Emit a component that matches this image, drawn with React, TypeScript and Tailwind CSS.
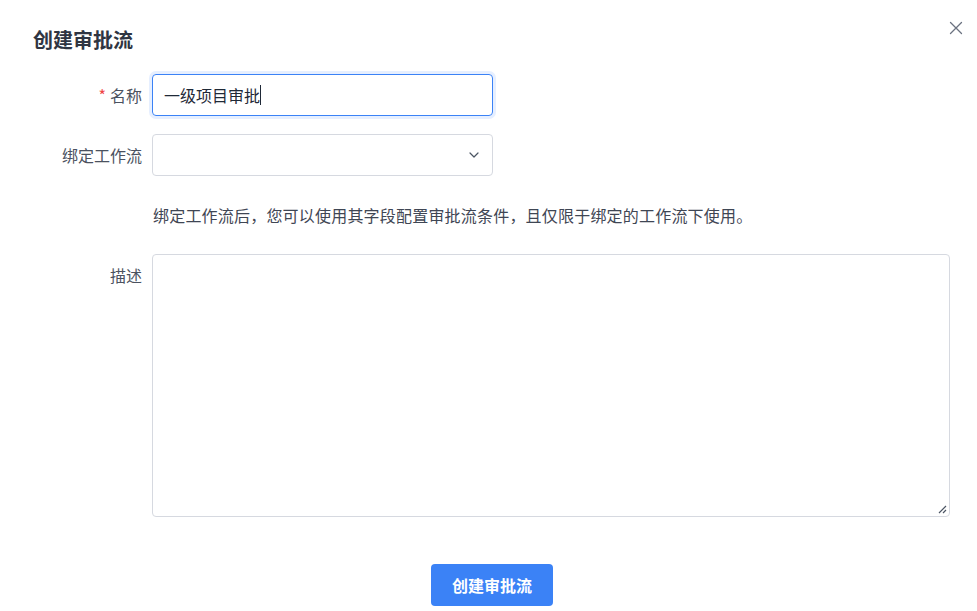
import React from "react";

export default function App() {
  const font = { fontFamily: '"Noto Sans CJK SC", "Noto Sans", sans-serif' };
  return (
    <div className="relative w-[977px] h-[611px] bg-white overflow-hidden" style={font}>
      <button className="absolute right-[14px] top-[21px] w-[14px] h-[14px] flex items-center justify-center text-[#6b7280]">
        <svg width="14" height="14" viewBox="0 0 14 14" fill="none" stroke="currentColor" strokeWidth="1.3" strokeLinecap="round">
          <path d="M1.5 1.5 L12.5 12.5 M12.5 1.5 L1.5 12.5" />
        </svg>
      </button>
      <div className="pl-[33px] pr-[27px] pt-[26px]">
        <h2 className="text-[20px] leading-[28px] font-bold text-[#2f3542]">创建审批流</h2>
        <div className="mt-[20px] flex flex-col">
          <div className="flex items-center">
            <label className="w-[109px] mr-[10px] text-right text-[16px] text-[#4b5260] leading-[24px] -mt-[1px]">
              <span className="text-[#ef4444] mr-[4px]">*</span>名称
            </label>
            <div className="w-[341px] h-[42px] rounded-[4px] border border-[#3b82f6] ring-[3px] ring-[#e6efff] flex items-center px-[11px] text-[16px] text-[#1f2937]">
              一级项目审批<span className="inline-block w-px h-[20px] bg-[#1f2937]"></span>
            </div>
          </div>
          <div className="flex items-center mt-[18px]">
            <label className="w-[109px] mr-[10px] text-right text-[16px] text-[#4b5260] leading-[24px]">绑定工作流</label>
            <div className="w-[341px] h-[42px] rounded-[4px] border border-[#d6d9e0] flex items-center justify-end pr-[13px]">
              <svg width="10" height="6" viewBox="0 0 10 6" fill="none" stroke="#4b5563" strokeWidth="1.2" strokeLinecap="round" strokeLinejoin="round">
                <path d="M1 1 L5 5 L9 1" />
              </svg>
            </div>
          </div>
          <p className="ml-[120px] mt-[27px] text-[16px] leading-[24px] text-[#3f4654] tracking-[0.2px]">
            绑定工作流后，您可以使用其字段配置审批流条件，且仅限于绑定的工作流下使用。
          </p>
          <div className="flex items-start mt-[27px]">
            <label className="w-[109px] mr-[10px] text-right text-[16px] text-[#4b5260] leading-[24px] mt-[9px]">描述</label>
            <div className="relative w-[798px] h-[263px] rounded-[4px] border border-[#d6d9e0]">
              <svg className="absolute right-[2px] bottom-[2px]" width="10" height="10" viewBox="0 0 10 10" fill="none" stroke="#4b5563" strokeWidth="1.2">
                <path d="M9 2 L2 9 M9 6 L6 9" />
              </svg>
            </div>
          </div>
          <div className="mt-[47px] ml-[398px]">
            <button className="w-[122px] h-[42px] rounded-[4px] bg-[#3b82f6] text-white text-[16px] font-bold">创建审批流</button>
          </div>
        </div>
      </div>
    </div>
  );
}
